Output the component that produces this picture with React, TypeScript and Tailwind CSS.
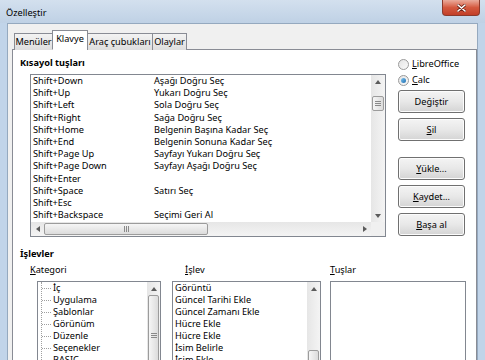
import React from 'react';

type Dir = 'up' | 'down' | 'left' | 'right';

const arrowPaths: Record<Dir, string> = {
    up: 'M0 4 L3 0 L6 4 Z',
    down: 'M0 0 L6 0 L3 4 Z',
    left: 'M4 0 L4 6 L0 3 Z',
    right: 'M0 0 L4 3 L0 6 Z',
};

const Arrow: React.FC<{ dir: Dir }> = ({ dir }) => {
    const vertical = dir === 'up' || dir === 'down';
    return (
        <svg width={vertical ? 6 : 4} height={vertical ? 4 : 6} viewBox={vertical ? '0 0 6 4' : '0 0 4 6'}>
            <path d={arrowPaths[dir]} fill="#5b5b5b" />
        </svg>
    );
};

const Grip: React.FC<{ vertical?: boolean }> = ({ vertical }) => (
    <div className={vertical ? 'flex flex-col gap-[1px]' : 'flex gap-[1px]'}>
        {[0, 1, 2].map((i) => (
            <div key={i} className={vertical ? 'w-[6px] h-px bg-[#8a8a8a]' : 'h-[6px] w-px bg-[#8a8a8a]'} />
        ))}
    </div>
);

const Thumb: React.FC<{ className: string; vertical?: boolean }> = ({ className, vertical }) => (
    <div
        className={`flex items-center justify-center rounded-[2px] border border-[#9c9c9c] ${
            vertical ? 'bg-gradient-to-r' : 'bg-gradient-to-b'
        } from-[#f6f6f6] to-[#dcdcdc] ${className}`}
    >
        <Grip vertical={vertical} />
    </div>
);

const ArrowBox: React.FC<{ dir: Dir }> = ({ dir }) => (
    <div className="w-[13px] h-[13px] shrink-0 flex items-center justify-center">
        <Arrow dir={dir} />
    </div>
);

const shortcuts: [string, string][] = [
    ['Shift+Down', 'Aşağı Doğru Seç'],
    ['Shift+Up', 'Yukarı Doğru Seç'],
    ['Shift+Left', 'Sola Doğru Seç'],
    ['Shift+Right', 'Sağa Doğru Seç'],
    ['Shift+Home', 'Belgenin Başına Kadar Seç'],
    ['Shift+End', 'Belgenin Sonuna Kadar Seç'],
    ['Shift+Page Up', 'Sayfayı Yukarı Doğru Seç'],
    ['Shift+Page Down', 'Sayfayı Aşağı Doğru Seç'],
    ['Shift+Enter', ''],
    ['Shift+Space', 'Satırı Seç'],
    ['Shift+Esc', ''],
    ['Shift+Backspace', 'Seçimi Geri Al'],
    ['Shift+Insert', ''],
];

const categories = ['İç', 'Uygulama', 'Şablonlar', 'Görünüm', 'Düzenle', 'Seçenekler', 'BASIC'];
const functions = ['Görüntü', 'Güncel Tarihi Ekle', 'Güncel Zamanı Ekle', 'Hücre Ekle', 'Hücre Ekle', 'İsim Belirle', 'İsim Ekle'];

const Button: React.FC<{ children: React.ReactNode; className?: string }> = ({ children, className = '' }) => (
    <button
        className={`w-[67px] h-[23px] rounded-[3px] border border-[#707070] bg-gradient-to-b from-[#f4f4f4] via-[#e8e8e8] to-[#d4d4d4] shadow-[inset_0_0_0_1px_#fcfcfc] leading-none ${className}`}
    >
        {children}
    </button>
);

const Radio: React.FC<{ checked?: boolean; children: React.ReactNode }> = ({ checked, children }) => (
    <div className="h-[16px] flex items-center gap-[3px]">
        <div className="w-[11px] h-[11px] rounded-full border border-[#9a9a9a] bg-gradient-to-br from-[#e4e4e4] to-[#fafafa] flex items-center justify-center">
            {checked && <div className="w-[5px] h-[5px] rounded-full bg-gradient-to-br from-[#7cc4f0] to-[#1d6fb0]" />}
        </div>
        <span>{children}</span>
    </div>
);

const U: React.FC<{ children: React.ReactNode }> = ({ children }) => (
    <span className="underline underline-offset-[1px]">{children}</span>
);

const tabs = [
    { label: 'Menüler', w: 'w-[39px]' },
    { label: 'Klavye', w: 'w-[36px]', active: true },
    { label: 'Araç çubukları', w: 'w-[66px]' },
    { label: 'Olaylar', w: 'w-[35px]' },
];

const App: React.FC = () => {
    return (
        <div className="w-[485px] h-[360px] overflow-hidden flex flex-col bg-[#c1d4e9] text-[9.2px] text-black font-['Noto_Sans',sans-serif]">
            {/* title bar */}
            <div className="h-[23px] shrink-0 flex items-start justify-between bg-gradient-to-b from-[#d3e0ee] to-[#bfd1e5]">
                <span className="pl-[6px] pt-[8px] leading-none">Özelleştir</span>
                <div className="mr-[5px] w-[38px] h-[16px] rounded-b-[4px] border border-t-0 border-[#8b3a2c] bg-gradient-to-b from-[#e9ab9c] via-[#d4593f] to-[#c23f28] flex items-center justify-center">
                    <svg width="9" height="8" viewBox="0 0 9 8">
                        <path d="M1 1 L8 7 M8 1 L1 7" stroke="#6b2418" strokeWidth="3" strokeLinecap="round" />
                        <path d="M1 1 L8 7 M8 1 L1 7" stroke="#ffffff" strokeWidth="1.6" strokeLinecap="round" />
                    </svg>
                </div>
            </div>

            <div className="flex-1 min-h-0 flex px-[7px]">
                <div className="flex-1 flex flex-col bg-[#f0f0f0] border border-b-0 border-[#95a9bf] pt-[6px] pl-[4px]">
                    {/* tabs */}
                    <div className="flex items-end ml-[3px] -mb-px relative z-10">
                        {tabs.map((t) => (
                            <div
                                key={t.label}
                                className={`${t.w} -ml-px flex items-center justify-center border border-[#898c95] whitespace-nowrap ${
                                    t.active
                                        ? 'h-[20px] bg-white border-b-white pb-[2px]'
                                        : 'h-[17px] border-b-0 bg-gradient-to-b from-[#f3f3f3] to-[#dedede]'
                                }`}
                            >
                                {t.label}
                            </div>
                        ))}
                    </div>

                    {/* panel */}
                    <div className="flex-1 bg-white border border-[#898c95] border-b-0 pl-[7px] pt-[7px]">
                        <div className="flex">
                            <div className="flex flex-col">
                                <div className="font-bold leading-[12px]">Kısayol tuşları</div>
                                <div className="ml-[10px] mt-[5px] w-[356px] h-[163px] border border-[#828790] flex flex-col">
                                    <div className="flex flex-1 min-h-0">
                                        <div className="flex-1 overflow-hidden pl-[2px]">
                                            {shortcuts.map(([k, v]) => (
                                                <div key={k} className="flex h-[12.2px] leading-[12.2px] whitespace-nowrap">
                                                    <span className="w-[121px]">{k}</span>
                                                    <span>{v}</span>
                                                </div>
                                            ))}
                                        </div>
                                        <div className="w-[14px] flex flex-col bg-gradient-to-r from-[#e6e6e6] to-[#f4f4f4]">
                                            <ArrowBox dir="up" />
                                            <div className="flex-1 flex flex-col items-center">
                                                <Thumb vertical className="mt-[8px] w-[12px] h-[15px]" />
                                            </div>
                                            <ArrowBox dir="down" />
                                        </div>
                                    </div>
                                    <div className="h-[14px] flex bg-gradient-to-b from-[#e6e6e6] to-[#f4f4f4]">
                                        <ArrowBox dir="left" />
                                        <div className="flex-1 flex items-center">
                                            <Thumb className="w-[164px] h-[12px]" />
                                        </div>
                                        <ArrowBox dir="right" />
                                        <div className="w-[14px] bg-[#f0f0f0]" />
                                    </div>
                                </div>
                            </div>

                            <div className="ml-[12px] -mt-[1px] flex flex-col">
                                <Radio>
                                    <U>L</U>ibreOffice
                                </Radio>
                                <Radio checked>
                                    <U>C</U>alc
                                </Radio>
                                <Button className="mt-[2px]">Değiştir</Button>
                                <Button className="mt-[5px]">
                                    <U>S</U>il
                                </Button>
                                <Button className="mt-[16px]">
                                    <U>Y</U>ükle...
                                </Button>
                                <Button className="mt-[5px]">
                                    <U>K</U>aydet...
                                </Button>
                                <Button className="mt-[5px]">
                                    <U>B</U>aşa al
                                </Button>
                            </div>
                        </div>

                        <div className="font-bold leading-[12px] mt-[11px]">İşlevler</div>

                        <div className="flex ml-[10px] mt-[4px]">
                            {/* Kategori */}
                            <div className="w-[131px] flex flex-col">
                                <div className="leading-[12px]">
                                    <U>K</U>ategori
                                </div>
                                <div className="ml-[7px] mt-[5px] w-[124px] h-[100px] border border-[#828790] flex">
                                    <div className="flex-1 overflow-hidden relative">
                                        <div className="absolute left-[3px] top-0 bottom-0 border-l border-dotted border-[#a0a0a0]" />
                                        {categories.map((c) => (
                                            <div key={c} className="flex items-center h-[12px] leading-[12px]">
                                                <div className="ml-[4px] w-[9px] border-t border-dotted border-[#a0a0a0]" />
                                                <span className="ml-[2px]">{c}</span>
                                            </div>
                                        ))}
                                    </div>
                                    <div className="w-[13px] flex flex-col bg-gradient-to-r from-[#e6e6e6] to-[#f4f4f4]">
                                        <ArrowBox dir="up" />
                                        <Thumb vertical className="ml-px w-[11px] h-[80px]" />
                                    </div>
                                </div>
                            </div>

                            {/* İşlev */}
                            <div className="ml-[11px] w-[149px] flex flex-col">
                                <div className="leading-[12px] pl-[13px]">
                                    <U>İ</U>şlev
                                </div>
                                <div className="mt-[5px] h-[100px] border border-[#828790] flex">
                                    <div className="flex-1 overflow-hidden pl-[2px]">
                                        {functions.map((f, i) => (
                                            <div key={i} className="h-[12px] leading-[12px] whitespace-nowrap">
                                                {f}
                                            </div>
                                        ))}
                                    </div>
                                    <div className="w-[13px] flex flex-col bg-gradient-to-r from-[#e6e6e6] to-[#f4f4f4]">
                                        <ArrowBox dir="up" />
                                        <div className="flex-1 flex flex-col">
                                            <Thumb vertical className="ml-px mt-[55px] w-[11px] h-[30px]" />
                                        </div>
                                    </div>
                                </div>
                            </div>

                            {/* Tuşlar */}
                            <div className="ml-[9px] w-[136px] flex flex-col">
                                <div className="leading-[12px]">
                                    <U>T</U>uşlar
                                </div>
                                <div className="mt-[5px] h-[100px] border border-[#828790]" />
                            </div>
                        </div>
                    </div>
                </div>
            </div>
        </div>
    );
};

export default App;
